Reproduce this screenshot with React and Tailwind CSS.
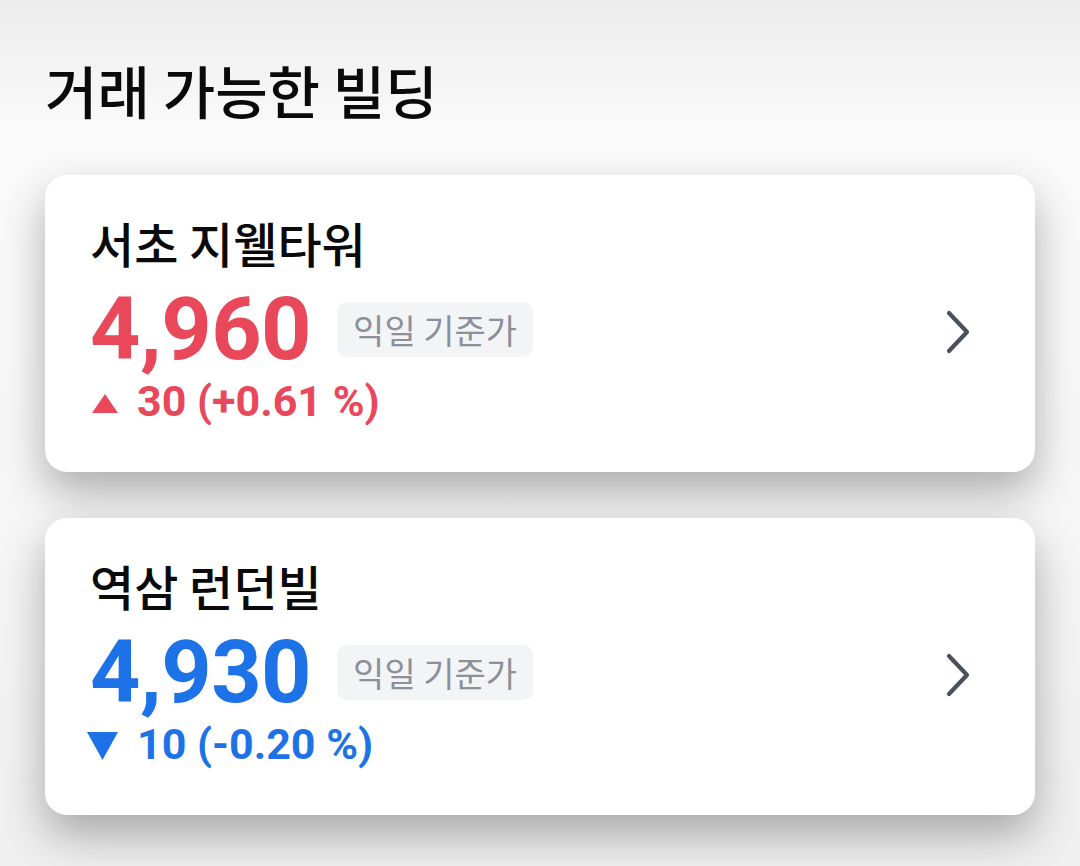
import React from "react";

const cjk = { fontFamily: '"Noto Sans CJK KR", "Noto Sans", sans-serif' };
const num = { fontFamily: 'Roboto, "Noto Sans CJK KR", sans-serif' };

function Chevron() {
  return (
    <svg width="28" height="44" viewBox="0 0 28 44" fill="none">
      <path d="M4 3 L22 22 L4 41" stroke="#4a505c" strokeWidth="4.2" strokeLinecap="round" strokeLinejoin="round" />
    </svg>
  );
}

function Card({ name, price, up, diff, pct }) {
  const color = up ? "text-[#e8485a]" : "text-[#1e72e8]";
  return (
    <div className="bg-white rounded-[22px] h-[297px] pl-[45px] pr-[62px] pt-[43px] shadow-[0_20px_44px_rgba(0,0,0,0.3)]">
      <div className="text-[48px] leading-[48px] text-[#0a0a0a] font-medium" style={cjk}>{name}</div>
      <div className="flex items-center mt-[19px] h-[88px]">
        <div className={`text-[88px] leading-[88px] font-bold tracking-[-0.5px] ${color}`} style={num}>{price}</div>
        <div className="ml-[26px] h-[55px] px-[16px] flex items-center rounded-[10px] bg-[#f3f4f6] text-[34px] text-[#8b9099]" style={cjk}>
          익일 기준가
        </div>
        <div className="ml-auto mt-[6px]"><Chevron /></div>
      </div>
      <div className={`flex items-center mt-[7px] h-[43px] ${color}`}>
        <div className="w-[47px] flex items-center">
          {up ? (
            <svg width="26" height="19" viewBox="0 0 26 19" className="ml-[2px] mt-[4px]">
              <path d="M13 0 L26 19 L0 19 Z" fill="#e8485a" />
            </svg>
          ) : (
            <svg width="31" height="28" viewBox="0 0 31 28" className="-ml-[3px] mt-[2px]">
              <path d="M0 0 L31 0 L15.5 28 Z" fill="#1e72e8" />
            </svg>
          )}
        </div>
        <div className="text-[43px] leading-[43px] font-bold" style={num}>
          {diff} ({pct} %)
        </div>
      </div>
    </div>
  );
}

export default function App() {
  return (
    <div className="w-[1080px] h-[866px] overflow-hidden bg-[linear-gradient(180deg,#ececec_0%,#fafafa_15%,#f7f7f7_55%,#efefef_100%)]">
      <div className="px-[45px] pt-[58px]">
        <h1 className="text-[57px] leading-[62px] text-[#0a0a0a] font-medium" style={cjk}>
          거래 가능한 빌딩
        </h1>
        <div className="mt-[55px] flex flex-col gap-[46px]">
          <Card name="서초 지웰타워" price="4,960" up diff="30" pct="+0.61" />
          <Card name="역삼 런던빌" price="4,930" up={false} diff="10" pct="-0.20" />
        </div>
      </div>
    </div>
  );
}
